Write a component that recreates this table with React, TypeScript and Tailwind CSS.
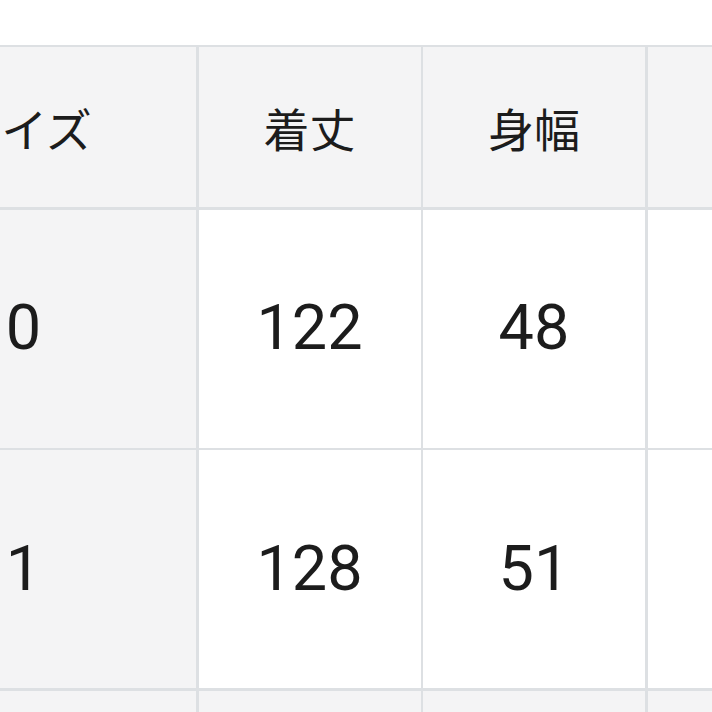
import React from "react";

const headers = ["サイズ", "着丈", "身幅", ""];
const rows = [
  ["0", "122", "48", ""],
  ["1", "128", "51", ""],
  ["", "", "", ""],
];

export default function App() {
  return (
    <div className="w-[712px] h-[712px] overflow-hidden bg-white pt-[45px] text-[#1c1c1c] font-['Roboto','Noto_Sans_CJK_JP',sans-serif]">
      <div className="ml-[-149px] w-max border-t-[2.5px] border-[#dde0e3] bg-[#dde0e3] grid grid-cols-[345px_222px_222px_222px] grid-rows-[160px_238px_238px_238px] gap-[2.5px]">
        {headers.map((h, i) => (
          <div
            key={i}
            className="flex items-center justify-center bg-[#f4f4f5] text-[46px] font-['Noto_Sans_CJK_JP',sans-serif]"
          >
            {h}
          </div>
        ))}
        {rows.map((r, ri) =>
          r.map((c, ci) => (
            <div
              key={`${ri}-${ci}`}
              className={`flex items-center justify-center text-[63px] ${
                ci === 0 || ri === 2 ? "bg-[#f4f4f5]" : "bg-white"
              }`}
            >
              {c}
            </div>
          ))
        )}
      </div>
    </div>
  );
}
